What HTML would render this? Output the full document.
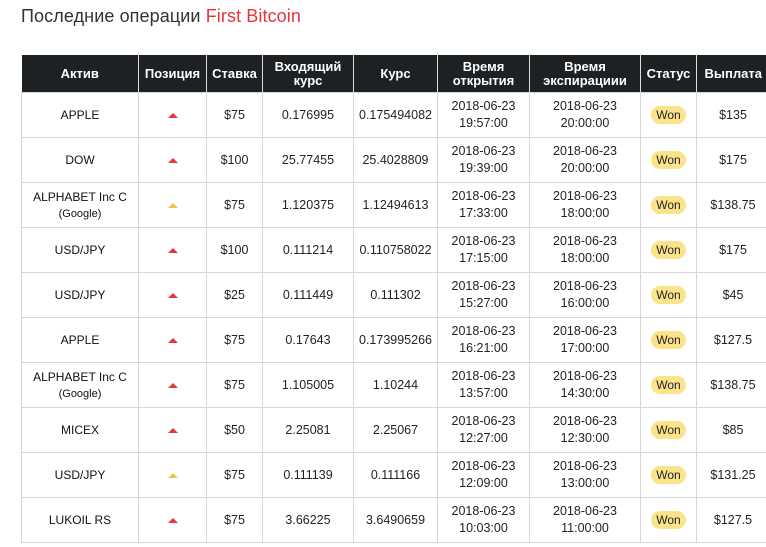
<!DOCTYPE html>
<html><head><meta charset="utf-8"><style>
body{margin:0;background:#fff;width:766px;height:547px;overflow:hidden;font-family:"Liberation Sans",sans-serif;color:#222}
h1{position:absolute;left:21px;top:6px;margin:0;font-weight:normal;font-size:18px;color:#333;letter-spacing:0.1px}
h1 span{color:#e8333c}
table{position:absolute;left:21px;top:55px;border-collapse:collapse;table-layout:fixed;width:748px}
th{background:#1e2124;color:#fff;font-size:13px;font-weight:bold;height:37px;padding:0;border-left:1px solid #ddd;line-height:14px}
th:first-child{border-left:none}
td{border:1px solid #d6d6d6;height:44px;padding:0;text-align:center;font-size:12.5px;line-height:17px;color:#222}
td.a{font-size:12px;line-height:16px;color:#111}
td.a small{font-size:11px}
.tr{display:inline-block;width:0;height:0;border-left:5px solid transparent;border-right:5px solid transparent;border-bottom:5px solid #e53935;vertical-align:middle}
.y{border-bottom-color:#f2c04f}
.w{display:inline-block;background:#fbe38b;border-radius:9px;padding:0 5px;height:18px;line-height:18px;font-size:12px}
</style></head><body>
<h1>Последние операции <span>First Bitcoin</span></h1>
<table>
<colgroup><col style="width:117px"><col style="width:68px"><col style="width:56px"><col style="width:91px"><col style="width:84px"><col style="width:92px"><col style="width:111px"><col style="width:56px"><col style="width:73px"></colgroup>
<tr><th>Актив</th><th>Позиция</th><th>Ставка</th><th>Входящий<br>курс</th><th>Курс</th><th>Время<br>открытия</th><th>Время<br>экспирациии</th><th>Статус</th><th>Выплата</th></tr>
<tr><td class="a">APPLE</td><td><i class="tr"></i></td><td>$75</td><td>0.176995</td><td>0.175494082</td><td>2018-06-23<br>19:57:00</td><td>2018-06-23<br>20:00:00</td><td><span class="w">Won</span></td><td>$135</td></tr>
<tr><td class="a">DOW</td><td><i class="tr"></i></td><td>$100</td><td>25.77455</td><td>25.4028809</td><td>2018-06-23<br>19:39:00</td><td>2018-06-23<br>20:00:00</td><td><span class="w">Won</span></td><td>$175</td></tr>
<tr><td class="a">ALPHABET Inc C<br><small>(Google)</small></td><td><i class="tr y"></i></td><td>$75</td><td>1.120375</td><td>1.12494613</td><td>2018-06-23<br>17:33:00</td><td>2018-06-23<br>18:00:00</td><td><span class="w">Won</span></td><td>$138.75</td></tr>
<tr><td class="a">USD/JPY</td><td><i class="tr"></i></td><td>$100</td><td>0.111214</td><td>0.110758022</td><td>2018-06-23<br>17:15:00</td><td>2018-06-23<br>18:00:00</td><td><span class="w">Won</span></td><td>$175</td></tr>
<tr><td class="a">USD/JPY</td><td><i class="tr"></i></td><td>$25</td><td>0.111449</td><td>0.111302</td><td>2018-06-23<br>15:27:00</td><td>2018-06-23<br>16:00:00</td><td><span class="w">Won</span></td><td>$45</td></tr>
<tr><td class="a">APPLE</td><td><i class="tr"></i></td><td>$75</td><td>0.17643</td><td>0.173995266</td><td>2018-06-23<br>16:21:00</td><td>2018-06-23<br>17:00:00</td><td><span class="w">Won</span></td><td>$127.5</td></tr>
<tr><td class="a">ALPHABET Inc C<br><small>(Google)</small></td><td><i class="tr"></i></td><td>$75</td><td>1.105005</td><td>1.10244</td><td>2018-06-23<br>13:57:00</td><td>2018-06-23<br>14:30:00</td><td><span class="w">Won</span></td><td>$138.75</td></tr>
<tr><td class="a">MICEX</td><td><i class="tr"></i></td><td>$50</td><td>2.25081</td><td>2.25067</td><td>2018-06-23<br>12:27:00</td><td>2018-06-23<br>12:30:00</td><td><span class="w">Won</span></td><td>$85</td></tr>
<tr><td class="a">USD/JPY</td><td><i class="tr y"></i></td><td>$75</td><td>0.111139</td><td>0.111166</td><td>2018-06-23<br>12:09:00</td><td>2018-06-23<br>13:00:00</td><td><span class="w">Won</span></td><td>$131.25</td></tr>
<tr><td class="a">LUKOIL RS</td><td><i class="tr"></i></td><td>$75</td><td>3.66225</td><td>3.6490659</td><td>2018-06-23<br>10:03:00</td><td>2018-06-23<br>11:00:00</td><td><span class="w">Won</span></td><td>$127.5</td></tr>
</table>
</body></html>
